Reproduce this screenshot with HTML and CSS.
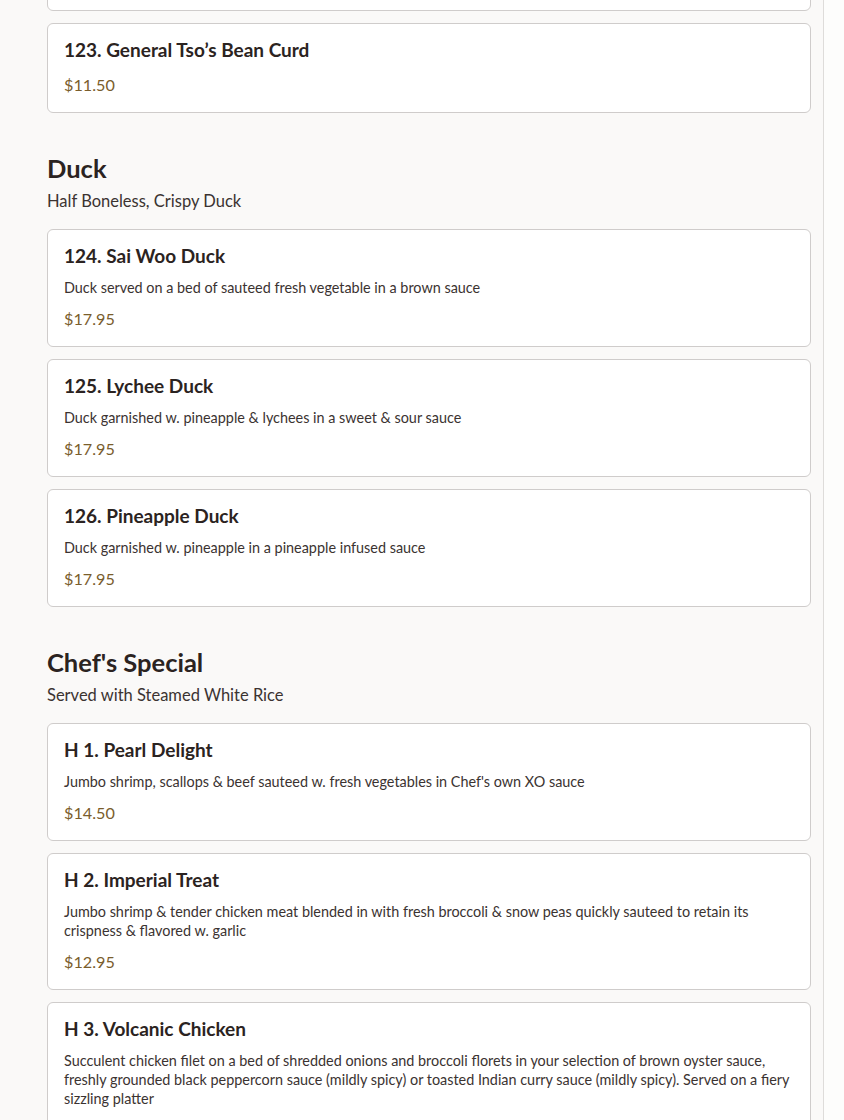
FILE: index.html
```html
<!DOCTYPE html>
<html lang="en">
<head>
<meta charset="utf-8">
<title>Menu</title>
<link rel="stylesheet" href="styles.css">
</head>
<body>
<div class="page">
  <main class="menu">
    <div class="card card-cut"></div>

    <div class="card">
      <div class="title">123. General Tso’s Bean Curd</div>
      <div class="price">$11.50</div>
    </div>

    <section class="section">
      <h2 class="sec-title">Duck</h2>
      <p class="sec-sub">Half Boneless, Crispy Duck</p>
      <div class="list">
        <div class="card">
          <div class="title">124. Sai Woo Duck</div>
          <div class="desc">Duck served on a bed of sauteed fresh vegetable in a brown sauce</div>
          <div class="price">$17.95</div>
        </div>
        <div class="card">
          <div class="title">125. Lychee Duck</div>
          <div class="desc">Duck garnished w. pineapple &amp; lychees in a sweet &amp; sour sauce</div>
          <div class="price">$17.95</div>
        </div>
        <div class="card">
          <div class="title">126. Pineapple Duck</div>
          <div class="desc">Duck garnished w. pineapple in a pineapple infused sauce</div>
          <div class="price">$17.95</div>
        </div>
      </div>
    </section>

    <section class="section">
      <h2 class="sec-title">Chef's Special</h2>
      <p class="sec-sub">Served with Steamed White Rice</p>
      <div class="list">
        <div class="card">
          <div class="title">H 1. Pearl Delight</div>
          <div class="desc">Jumbo shrimp, scallops &amp; beef sauteed w. fresh vegetables in Chef's own XO sauce</div>
          <div class="price">$14.50</div>
        </div>
        <div class="card">
          <div class="title">H 2. Imperial Treat</div>
          <div class="desc">Jumbo shrimp &amp; tender chicken meat blended in with fresh broccoli &amp; snow peas quickly sauteed to retain its crispness &amp; flavored w. garlic</div>
          <div class="price">$12.95</div>
        </div>
        <div class="card card-last">
          <div class="title">H 3. Volcanic Chicken</div>
          <div class="desc">Succulent chicken filet on a bed of shredded onions and broccoli florets in your selection of brown oyster sauce, freshly grounded black peppercorn sauce (mildly spicy) or toasted Indian curry sauce (mildly spicy). Served on a fiery sizzling platter</div>
        </div>
      </div>
    </section>
  </main>
  <div class="rail"></div>
</div>
</body>
</html>
```

FILE: styles.css
```css
html, body {
  margin: 0;
  padding: 0;
  background: #faf9f8;
  height: 1120px;
  overflow: hidden;
}
body {
  font-family: "Lato", "Noto Sans", sans-serif;
  color: #2b2321;
}
.page {
  display: flex;
  align-items: stretch;
  min-height: 1120px;
}
.menu {
  width: 764px;
  margin-left: 47px;
  margin-right: 12px;
  display: flex;
  flex-direction: column;
  gap: 12px;
  margin-top: -79px;
}
.rail {
  width: 20px;
  border-left: 1px solid #dedcda;
  background: #fdfdfc;
}
.card {
  background: #fff;
  border: 1px solid #cfcccb;
  border-radius: 6px;
  padding: 16px 16px 17px 16px;
}
.card-cut {
  height: 90px;
  box-sizing: border-box;
}
.card-last {
  padding-bottom: 60px;
}
.title {
  font-size: 19px;
  line-height: 20px;
  font-weight: 700;
  color: #2b2321;
}
.desc {
  font-size: 14.4px;
  line-height: 19px;
  margin: 12px 0 12px;
  color: #3b3331;
}
.price {
  font-size: 16.2px;
  line-height: 20px;
  color: #7a5d2c;
}
.title + .price {
  margin-top: 15px;
}
.section {
  margin-top: 27px;
}
.sec-title {
  margin: 0;
  font-size: 25.5px;
  line-height: 32px;
  font-weight: 700;
  color: #2b2321;
}
.sec-sub {
  margin: 6px 0 17px;
  font-size: 16.5px;
  line-height: 22px;
  color: #3b3331;
}
.list {
  display: flex;
  flex-direction: column;
  gap: 12px;
}
```
